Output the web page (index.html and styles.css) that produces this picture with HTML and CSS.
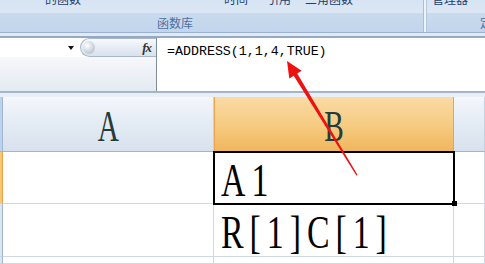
FILE: index.html
```html
<!DOCTYPE html>
<html lang="zh-CN">
<head>
    <meta charset="UTF-8">
    <meta name="viewport" content="width=device-width, initial-scale=1.0">
    <title>ADDRESS</title>
    <link rel="stylesheet" href="styles.css">
</head>
<body>
    <div class="ribbon">
        <div class="group group-func">
            <div class="group-top">
                <span class="cmd c1">的函数</span>
                <span class="cmd c2">时间</span>
                <span class="cmd c3">引用</span>
                <span class="cmd c4">三角函数</span>
            </div>
            <div class="group-label label-func">函数库</div>
        </div>
        <div class="group-sep"></div>
        <div class="group group-names">
            <div class="group-top">
                <span class="cmd c5">管理器</span>
            </div>
            <div class="group-label label-names">定义的名称</div>
        </div>
    </div>
    <div class="band"></div>

    <div class="formula-bar">
        <div class="name-col">
            <div class="name-row">
                <div class="name-box"><span class="drop"></span></div>
                <div class="fx-pill">
                    <span class="knob"></span>
                    <span class="fx">fx</span>
                </div>
            </div>
            <div class="name-fill"></div>
        </div>
        <div class="formula-text">=ADDRESS(1,1,4,TRUE)</div>
    </div>
    <div class="strip"></div>

    <div class="sheet">
        <div class="corner"></div>
        <div class="col-head"><span class="head-letter">A</span></div>
        <div class="col-head col-active"><span class="head-letter">B</span></div>
        <div class="col-head"></div>

        <div class="row-head row-active"></div>
        <div class="cell"></div>
        <div class="cell cell-active"><span class="val">A1</span></div>
        <div class="cell"></div>

        <div class="row-head"></div>
        <div class="cell"></div>
        <div class="cell"><span class="val">R[1]C[1]</span></div>
        <div class="cell"></div>

        <div class="row-head"></div>
        <div class="cell"></div>
        <div class="cell"></div>
        <div class="cell"></div>
    </div>

    <svg class="arrow" width="485" height="264" viewBox="0 0 485 264">
        <polygon points="287,61 301.6,70.8 297.2,73.6 357.6,175 356.4,175.4 293.7,75.7 289.3,78.4" fill="#ee1111"/>
    </svg>
</body>
</html>
```

FILE: styles.css
```css
body {
    margin: 0;
    width: 485px;
    height: 264px;
    overflow: hidden;
    position: relative;
    background: #fff;
    font-family: "Noto Sans CJK SC", sans-serif;
}

/* ribbon */
.ribbon {
    display: flex;
    height: 32px;
    border-bottom: 1px solid #99b2d1;
}

.group {
    display: flex;
    flex-direction: column;
}

.group-func {
    width: 423px;
}

.group-names {
    flex: 1;
    overflow: hidden;
}

.group-top {
    height: 13px;
    display: flex;
    overflow: hidden;
    background: linear-gradient(#d7e4f3, #dce7f5);
}

.cmd {
    font-size: 12px;
    line-height: 12px;
    margin-top: -7px;
    color: #1e3f73;
    white-space: nowrap;
}

.c1 { margin-left: 45px; }
.c2 { margin-left: 143px; }
.c3 { margin-left: 19px; }
.c4 { margin-left: 14px; }
.c5 { margin-left: 5px; }

.group-label {
    height: 19px;
    line-height: 19px;
    font-size: 12px;
    color: #4c6fa0;
    background: linear-gradient(#c9daee, #c2d5ec);
    white-space: nowrap;
}

.label-func {
    padding-left: 157px;
}

.label-names {
    padding-left: 53px;
}

.group-sep {
    width: 4px;
    background: #eef3f9;
    border-left: 1px solid #a9bfd9;
    border-right: 1px solid #b4c8df;
    box-sizing: border-box;
}

.band {
    height: 3px;
    background: #e2e9f3;
}

/* formula bar */
.formula-bar {
    display: flex;
    height: 53px;
    border-top: 2px solid #95a9c1;
    border-bottom: 2px solid #a3b5cb;
}

.name-col {
    width: 156px;
    display: flex;
    flex-direction: column;
    border-right: 1px solid #7f8c99;
}

.name-row {
    display: flex;
    height: 19px;
}

.name-box {
    width: 80px;
    background: #fff;
    position: relative;
}

.drop {
    position: absolute;
    left: 68px;
    top: 8px;
    width: 0;
    height: 0;
    border-left: 3.5px solid transparent;
    border-right: 3.5px solid transparent;
    border-top: 4px solid #111;
}

.fx-pill {
    flex: 1;
    display: flex;
    align-items: center;
    justify-content: space-between;
    padding: 0 5px 0 2px;
    border-radius: 10px 0 0 10px;
    border: 1px solid #a8b8cc;
    border-right: none;
    background: linear-gradient(#f7f9fc, #e3eaf3 60%, #d8e2ed);
}

.knob {
    width: 12px;
    height: 13px;
    border-radius: 50%;
    background: radial-gradient(circle at 35% 35%, #ffffff, #c8d0da 60%, #aab4c0);
}

.fx {
    font-family: "Liberation Serif", serif;
    font-style: italic;
    font-weight: bold;
    font-size: 13px;
    color: #333;
    letter-spacing: -1px;
}

.name-fill {
    flex: 1;
    background: linear-gradient(#f6f8fb, #e4eaf2);
}

.formula-text {
    flex: 1;
    padding: 6px 0 0 10px;
    font-family: "Liberation Mono", monospace;
    font-size: 13.3px;
    line-height: 16px;
    color: #000;
    background: #fff;
}

.strip {
    height: 4px;
    background: #eaeff6;
}

/* sheet grid */
.sheet {
    display: grid;
    grid-template-columns: 3px 211px 240px 1fr;
    grid-template-rows: 55px 52px 53px 1fr;
    height: 167px;
}

.sheet > div {
    box-sizing: border-box;
}

.corner {
    background: #bcd2ee;
    border-right: 1px solid #9eb6ce;
    border-bottom: 1px solid #9eb6ce;
}

.col-head {
    display: flex;
    justify-content: center;
    align-items: flex-start;
    padding-top: 7px;
    background: linear-gradient(#f4f7fb, #e4ebf4 50%, #d7e1ed);
    border-right: 1px solid #c5d2e0;
    border-bottom: 1px solid #9eb6ce;
}

.col-active {
    background: linear-gradient(#f9dba4, #f6cc84 50%, #f1b65c);
    border-left: 1px solid #eea750;
    border-right: 1px solid #e9a54d;
}

.head-letter {
    display: inline-block;
    font-family: "Liberation Serif", serif;
    font-size: 45px;
    line-height: 45px;
    color: #243b3a;
    transform: scaleX(0.65);
}

.row-head {
    background: #dbe6f4;
    border-right: 1px solid #9eb6ce;
    border-bottom: 1px solid #c5d2e0;
}

.row-active {
    background: #f7c576;
    border-right-color: #e8a24a;
}

.cell {
    display: flex;
    align-items: flex-start;
    padding: 5px 0 0 7px;
    border-right: 1px solid #d0d7e5;
    border-bottom: 1px solid #d0d7e5;
}

.cell-active {
    position: relative;
    outline: 2px solid #000;
    outline-offset: -1px;
}

.cell-active::after {
    content: "";
    position: absolute;
    right: -4px;
    bottom: -3px;
    width: 5px;
    height: 5px;
    background: #000;
}

.val {
    display: inline-block;
    font-family: "Liberation Serif", serif;
    font-size: 47px;
    line-height: 47px;
    letter-spacing: 8.3px;
    color: #000;
    white-space: nowrap;
    transform: scaleX(0.72);
    transform-origin: 0 50%;
}

.arrow {
    position: absolute;
    left: 0;
    top: 0;
    pointer-events: none;
}
```
